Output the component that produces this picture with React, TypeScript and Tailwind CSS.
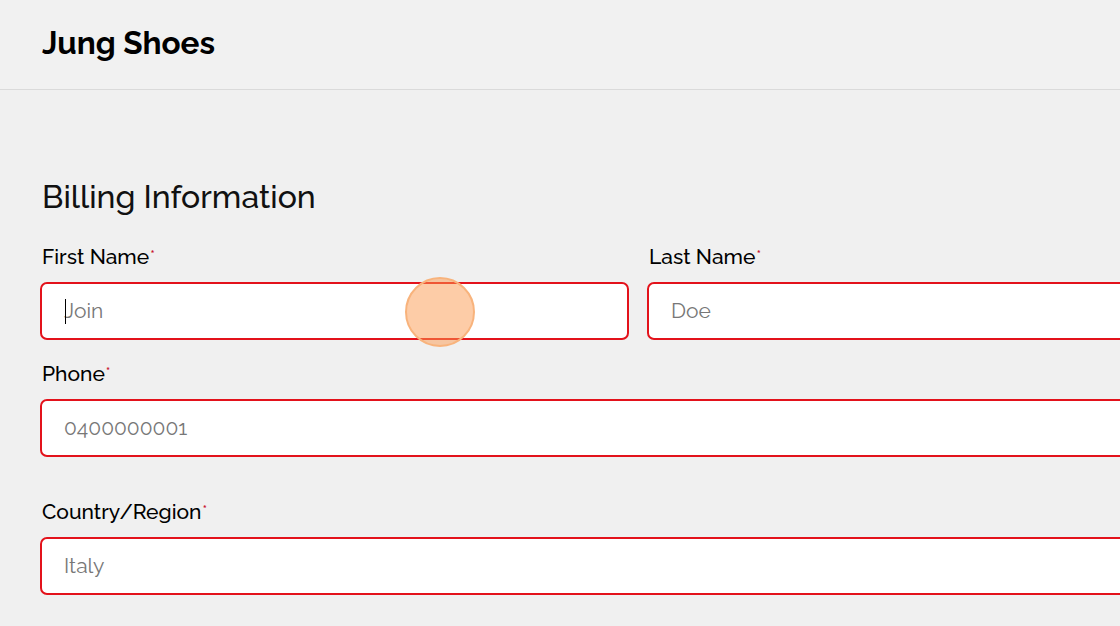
const Field = ({
  label,
  value,
  caret = false,
}: {
  label: string;
  value: string;
  caret?: boolean;
}) => {
  return (
    <div className="flex flex-col">
      <label className="h-[28px] leading-[28px] text-[21px] font-medium text-black mb-[11px] pl-[2px]">
        {label}
        <span className="text-[#c8102e] text-[14px] align-top leading-[26px] ml-[1px]">*</span>
      </label>
      <div className="relative h-[58px] rounded-[7px] border-2 border-[#e3121b] bg-white flex items-center pl-[22px] text-[21px] text-[#777777]">
        {caret && <span className="absolute left-[23px] top-[15px] h-[25px] w-px bg-black" />}
        {value}
      </div>
    </div>
  );
};

export default function App() {
  return (
    <div
      className="relative h-[626px] w-[1120px] overflow-hidden bg-[#f0f0f0]"
      style={{ fontFamily: "Raleway, Lato, 'Open Sans', sans-serif" }}
    >
      {/* Header */}
      <header className="h-[90px] border-b border-[#dadada] bg-[#f1f1f1] flex items-center pl-[42px]">
        <h1 className="text-[31.5px] font-bold text-black pb-[3px]">Jung Shoes</h1>
      </header>

      {/* Billing form */}
      <main className="w-[1236px] pl-[40px] pt-[87px]">
        <h2 className="h-[40px] leading-[40px] text-[32px] font-medium text-[#111] pl-[2px] mb-[26px]">
          Billing Information
        </h2>
        <div className="grid grid-cols-2 gap-x-[18px]">
          <Field label="First Name" value="Join" caret />
          <Field label="Last Name" value="Doe" />
        </div>
        <div className="mt-[20px]">
          <Field label="Phone" value="0400000001" />
        </div>
        <div className="mt-[41px]">
          <Field label="Country/Region" value="Italy" />
        </div>
      </main>

      {/* Click indicator */}
      <div className="absolute left-[405px] top-[277px] h-[70px] w-[70px] rounded-full border-2 border-[#f8b37c] bg-[#fb9a50]/50" />
    </div>
  );
}
